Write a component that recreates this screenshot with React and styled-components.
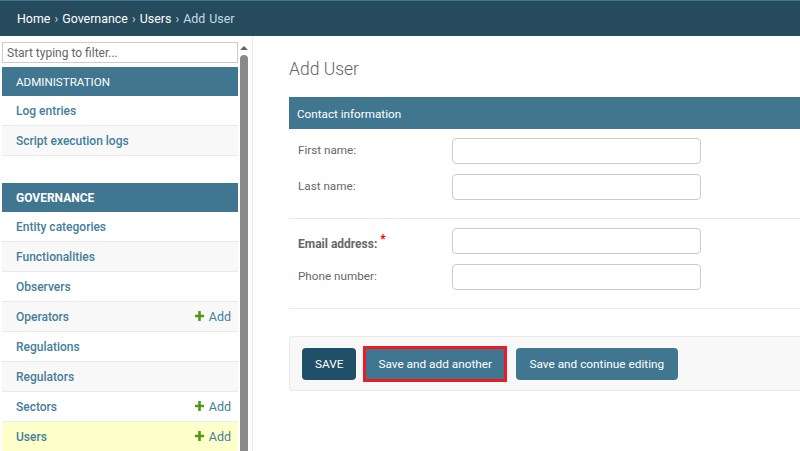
import React from "react";
import styled, { createGlobalStyle } from "styled-components";

const GlobalStyle = createGlobalStyle`
  html, body {
    margin: 0;
    padding: 0;
    height: 100%;
    overflow: hidden;
    background: #fff;
    font-family: Roboto, "Noto Sans", "Liberation Sans", sans-serif;
    font-size: 13px;
    color: #333;
  }
  * { box-sizing: border-box; }
`;

const groups = [
  {
    title: "ADMINISTRATION",
    rows: [{ name: "Log entries" }, { name: "Script execution logs" }],
  },
  {
    title: "GOVERNANCE",
    bold: true,
    rows: [
      { name: "Entity categories" },
      { name: "Functionalities" },
      { name: "Observers" },
      { name: "Operators", add: true },
      { name: "Regulations" },
      { name: "Regulators" },
      { name: "Sectors", add: true },
      { name: "Users", add: true, current: true },
    ],
  },
];

function App() {
  return (
    <Page>
      <GlobalStyle />
      <Breadcrumbs>
        Home <Sep>›</Sep> Governance <Sep>›</Sep> Users <Sep>›</Sep>{" "}
        <Current>Add User</Current>
      </Breadcrumbs>
      <Body>
        <Sidebar>
          <NavColumn>
            <Filter placeholder="Start typing to filter..." />
            {groups.map((group) => (
              <Group key={group.title}>
                <Caption $bold={group.bold}>{group.title}</Caption>
                {group.rows.map((row, i) => (
                  <Row key={row.name} $odd={i % 2 === 1} $current={row.current}>
                    <RowLink>{row.name}</RowLink>
                    {row.add && (
                      <AddLink>
                        <svg width="9" height="10" viewBox="0 0 9 10">
                          <path d="M3.2 0h2.6v3.7H9v2.6H5.8V10H3.2V6.3H0V3.7h3.2z" fill="#4f9a12" />
                        </svg>
                        Add
                      </AddLink>
                    )}
                  </Row>
                ))}
              </Group>
            ))}
          </NavColumn>
          <Scrollbar>
            <ArrowUp />
            <Thumb />
          </Scrollbar>
        </Sidebar>
        <Main>
          <Title>Add User</Title>
          <ModuleHeader>Contact information</ModuleHeader>
          <FieldGroup>
            <Field>
              <Label>First name:</Label>
              <TextInput />
            </Field>
            <Field>
              <Label>Last name:</Label>
              <TextInput />
            </Field>
          </FieldGroup>
          <FieldGroup>
            <Field>
              <Label $required>
                Email address:<Star>*</Star>
              </Label>
              <TextInput />
            </Field>
            <Field>
              <Label>Phone number:</Label>
              <TextInput />
            </Field>
          </FieldGroup>
          <SubmitRow>
            <SaveButton $primary>SAVE</SaveButton>
            <HighlightBox>
              <SaveButton>Save and add another</SaveButton>
            </HighlightBox>
            <SaveButton>Save and continue editing</SaveButton>
          </SubmitRow>
        </Main>
      </Body>
    </Page>
  );
}

export default App;

const Page = styled.div`
  width: 800px;
  height: 451px;
  display: flex;
  flex-direction: column;
  overflow: hidden;
`;

const Breadcrumbs = styled.div`
  height: 36px;
  flex: none;
  padding: 0 17px;
  line-height: 35px;
  background: #264b5d;
  border-top: 1px solid #417690;
  color: #fff;
  font-size: 12.4px;
  word-spacing: 1px;
  white-space: pre;
`;

const Sep = styled.span`
  color: #c4dce8;
`;

const Current = styled.span`
  color: #c4dce8;
`;

const Body = styled.div`
  flex: 1;
  display: flex;
  min-height: 0;
`;

const Sidebar = styled.div`
  width: 253px;
  flex: none;
  display: flex;
  padding: 6px 0 0 2px;
  border-right: 1px solid #eaeaea;
`;

const NavColumn = styled.div`
  width: 236px;
  flex: none;
`;

const Filter = styled.input`
  display: block;
  width: 236px;
  height: 21px;
  margin-bottom: 4px;
  padding: 0 4px;
  border: 1px solid #ccc;
  background: #fff;
  font: inherit;
  font-size: 12px;
  &::placeholder {
    color: #666;
    opacity: 1;
  }
`;

const Group = styled.div`
  margin-bottom: 27px;
`;

const Caption = styled.div`
  height: 29px;
  padding-left: 14px;
  display: flex;
  align-items: center;
  background: #417690;
  color: #fff;
  font-size: ${(props) => (props.$bold ? "12px" : "11.6px")};
  font-weight: ${(props) => (props.$bold ? 700 : 400)};
`;

const Row = styled.div`
  height: 30px;
  padding: 0 7px 0 14px;
  display: flex;
  align-items: center;
  justify-content: space-between;
  border-bottom: 1px solid #eaeaea;
  background: ${(props) =>
    props.$current ? "#ffffcc" : props.$odd ? "#f8f8f8" : "#fff"};
`;

const RowLink = styled.span`
  color: #447e9b;
  font-size: 12px;
  font-weight: 500;
`;

const AddLink = styled.span`
  display: flex;
  align-items: center;
  gap: 5px;
  color: #447e9b;
  font-size: 12.5px;
  svg {
    margin-top: -2px;
  }
`;

const Scrollbar = styled.div`
  width: 10px;
  margin-left: 1px;
  display: flex;
  flex-direction: column;
  align-items: center;
`;

const ArrowUp = styled.div`
  width: 0;
  height: 0;
  margin: 4px 0 5px;
  border-left: 4px solid transparent;
  border-right: 4px solid transparent;
  border-bottom: 4px solid #666;
`;

const Thumb = styled.div`
  width: 8px;
  flex: 1;
  border-radius: 4px 4px 0 0;
  background: #8a8a8a;
`;

const Main = styled.div`
  flex: 1;
  min-width: 0;
  margin-right: -10px;
  padding: 21px 0 0 36px;
`;

const Title = styled.h1`
  margin: 0 0 16px;
  font-size: 17.5px;
  line-height: 24px;
  font-weight: 300;
  color: #666;
`;

const ModuleHeader = styled.div`
  height: 32px;
  padding: 1px 0 0 8px;
  display: flex;
  align-items: center;
  background: #417690;
  color: #fff;
  font-size: 11.7px;
`;

const FieldGroup = styled.div`
  padding: 9px 0 18px 9px;
  display: flex;
  flex-direction: column;
  gap: 10px;
  border-bottom: 1px solid #eaeaea;
`;

const Field = styled.div`
  display: flex;
  align-items: center;
`;

const Label = styled.label`
  width: 154px;
  flex: none;
  color: #666;
  font-size: ${(props) => (props.$required ? "12px" : "11.7px")};
  font-weight: ${(props) => (props.$required ? 700 : 400)};
  padding: ${(props) => (props.$required ? "6px 0 0" : "0 0 2px")};
`;

const Star = styled.sup`
  margin-left: 3px;
  color: #e00;
  font-size: 12px;
  line-height: 0;
`;

const TextInput = styled.input`
  width: 249px;
  height: 26px;
  border: 1px solid #ccc;
  border-radius: 4px;
  background: #fff;
`;

const SubmitRow = styled.div`
  margin-top: 27px;
  height: 55px;
  padding: 0 12px;
  display: flex;
  align-items: center;
  gap: 7px;
  background: #f8f8f8;
  border: 1px solid #eaeaea;
  border-radius: 4px;
`;

const HighlightBox = styled.div`
  display: flex;
  margin-right: 2px;
  border: 3px solid #ed1c24;
`;

const SaveButton = styled.button`
  height: 32px;
  padding: ${(props) => (props.$primary ? "1px 13px 0" : "1px 13.5px 0")};
  border: 0;
  border-radius: 4px;
  background: ${(props) => (props.$primary ? "#205067" : "#417690")};
  color: #fff;
  font: inherit;
  font-size: 11.8px;
  ${HighlightBox} & {
    height: 30px;
    padding: 1px 12px 0;
    border-radius: 0;
  }
`;
